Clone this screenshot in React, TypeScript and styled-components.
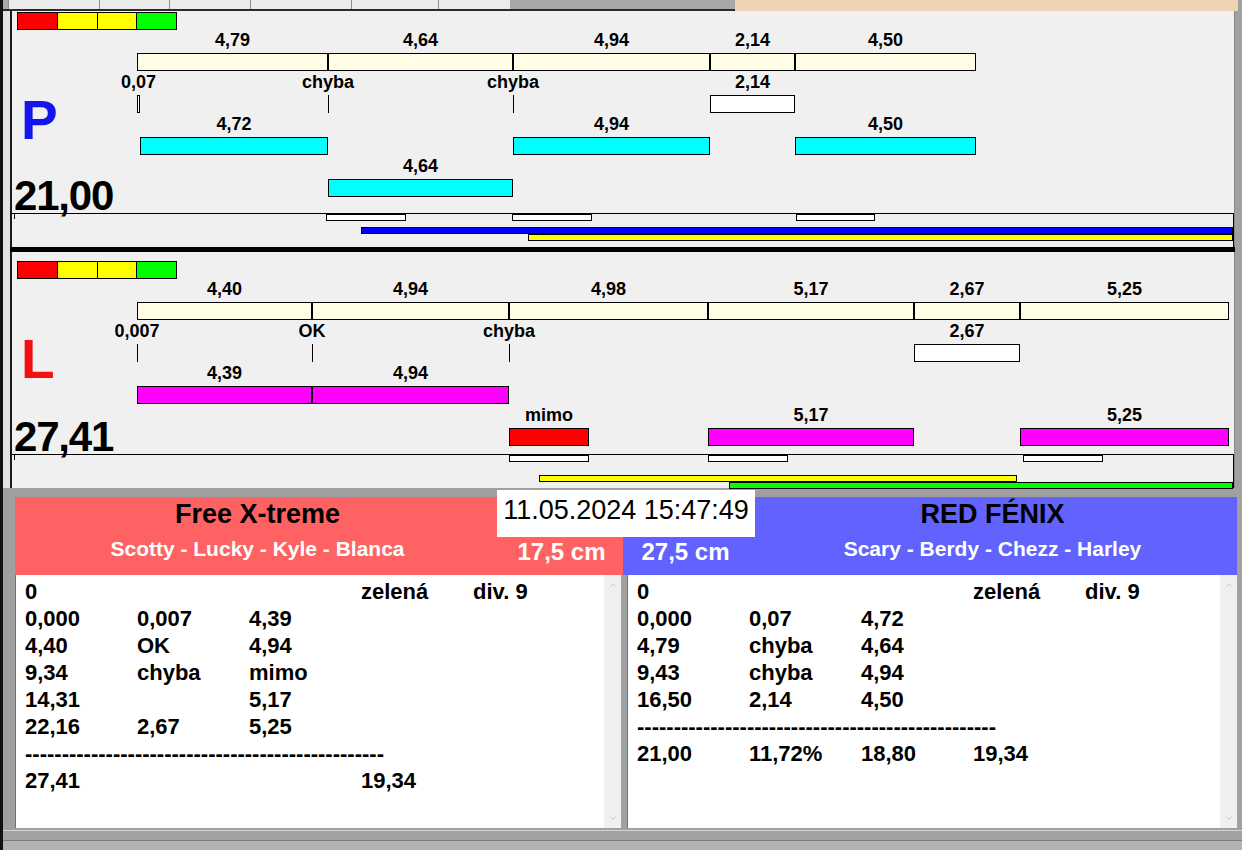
import React from "react"
import styled, { createGlobalStyle } from "styled-components"
import { ChevronUp, ChevronDown } from "lucide-react"

const GlobalStyle = createGlobalStyle`
  html, body {
    margin: 0;
    padding: 0;
    background: #a0a0a0;
  }
  body {
    font-family: "Liberation Sans", Arial, sans-serif;
  }
`

// px per second on the timeline
const SCALE = 39.85
const tx = (t: number) => Math.round(t * SCALE)

type Kind = "beige" | "white" | "cyan" | "magenta" | "red"
type Seg = { from: number; to: number; label: string; kind: Kind }
type Run = { from: number; to?: number; color: string }

type Race = {
  letter: string
  letterColor: string
  score: string
  padTop: number
  letterGap: number
  lanes: Seg[][]
  marks: number[]
  runs: Run[][]
}

const fills: Record<Kind, string> = {
  beige: "#fffde6",
  white: "#ffffff",
  cyan: "#00ffff",
  magenta: "#ff00ff",
  red: "#ff0000",
}

const seg = (from: number, to: number, label: string, kind: Kind): Seg => ({ from, to, label, kind })

const raceP: Race = {
  letter: "P",
  letterColor: "#1414ee",
  score: "21,00",
  padTop: 1,
  letterGap: 63,
  lanes: [
    [
      seg(0, 4.79, "4,79", "beige"),
      seg(4.79, 9.43, "4,64", "beige"),
      seg(9.43, 14.37, "4,94", "beige"),
      seg(14.37, 16.51, "2,14", "beige"),
      seg(16.51, 21.05, "4,50", "beige"),
    ],
    [
      seg(0, 0.07, "0,07", "white"),
      seg(4.79, 4.79, "chyba", "white"),
      seg(9.43, 9.43, "chyba", "white"),
      seg(14.37, 16.51, "2,14", "white"),
    ],
    [
      seg(0.07, 4.79, "4,72", "cyan"),
      seg(9.43, 14.37, "4,94", "cyan"),
      seg(16.51, 21.05, "4,50", "cyan"),
    ],
    [seg(4.79, 9.43, "4,64", "cyan")],
  ],
  marks: [4.74, 9.41, 16.53],
  runs: [[{ from: 5.62, color: "#0000ff" }], [{ from: 9.81, color: "#ffff00" }], []],
}

const raceL: Race = {
  letter: "L",
  letterColor: "#f21010",
  score: "27,41",
  padTop: 9,
  letterGap: 53,
  lanes: [
    [
      seg(0, 4.4, "4,40", "beige"),
      seg(4.4, 9.34, "4,94", "beige"),
      seg(9.34, 14.32, "4,98", "beige"),
      seg(14.32, 19.49, "5,17", "beige"),
      seg(19.49, 22.16, "2,67", "beige"),
      seg(22.16, 27.41, "5,25", "beige"),
    ],
    [
      seg(0, 0.007, "0,007", "white"),
      seg(4.4, 4.4, "OK", "white"),
      seg(9.34, 9.34, "chyba", "white"),
      seg(19.49, 22.16, "2,67", "white"),
    ],
    [seg(0.007, 4.4, "4,39", "magenta"), seg(4.4, 9.34, "4,94", "magenta")],
    [
      seg(9.34, 11.34, "mimo", "red"),
      seg(14.32, 19.49, "5,17", "magenta"),
      seg(22.16, 27.41, "5,25", "magenta"),
    ],
  ],
  marks: [9.34, 14.33, 22.23],
  runs: [[], [{ from: 10.09, to: 22.08, color: "#ffff00" }], [{ from: 14.86, color: "#00ff00" }]],
}

type Team = {
  name: string
  players: string
  cm: string
  bg: string
  side: "left" | "right"
  rows: string[][]
  total: string[]
}

const DASHES = "-".repeat(49)

const teams: Team[] = [
  {
    name: "Free X-treme",
    players: "Scotty - Lucky - Kyle - Blanca",
    cm: "17,5 cm",
    bg: "#ff6262",
    side: "left",
    rows: [
      ["0", "", "", "zelená", "div. 9"],
      ["0,000", "0,007", "4,39"],
      ["4,40", "OK", "4,94"],
      ["9,34", "chyba", "mimo"],
      ["14,31", "", "5,17"],
      ["22,16", "2,67", "5,25"],
    ],
    total: ["27,41", "", "", "19,34"],
  },
  {
    name: "RED FÉNIX",
    players: "Scary - Berdy - Chezz - Harley",
    cm: "27,5 cm",
    bg: "#6262ff",
    side: "right",
    rows: [
      ["0", "", "", "zelená", "div. 9"],
      ["0,000", "0,07", "4,72"],
      ["4,79", "chyba", "4,64"],
      ["9,43", "chyba", "4,94"],
      ["16,50", "2,14", "4,50"],
    ],
    total: ["21,00", "11,72%", "18,80", "19,34"],
  },
]

const tabWidths = [91, 70, 81, 101, 87, 72]

const Lanes = ({ lanes }: { lanes: Seg[][] }) => (
  <LaneStack>
    {lanes.map((lane, i) => (
      <Lane key={i}>
        {lane.map((s, j) => {
          const width = tx(s.to) - tx(s.from)
          return (
            <Slot key={j} style={{ left: tx(s.from), width }}>
              <Label>{s.label}</Label>
              {width > 0 ? <Bar $kind={s.kind} /> : <Tick />}
            </Slot>
          )
        })}
      </Lane>
    ))}
  </LaneStack>
)

const ChartPanel = ({ race }: { race: Race }) => (
  <Panel $padTop={race.padTop}>
    <ColorStrip>
      <Swatch $c="#ff0000" />
      <Swatch $c="#ffff00" />
      <Swatch $c="#ffff00" />
      <Swatch $c="#00ff00" />
    </ColorStrip>
    <Body>
      <Side>
        <Letter $color={race.letterColor} $gap={race.letterGap}>
          {race.letter}
        </Letter>
        <Score>{race.score}</Score>
      </Side>
      <Lanes lanes={race.lanes} />
    </Body>
    <Timeline>
      <MarkRow>
        {race.marks.map((m, i) => (
          <Mark key={i} style={{ left: tx(m), width: tx(m + 2) - tx(m) }} />
        ))}
      </MarkRow>
      {race.runs.map((row, i) => (
        <RunRow key={i} $h={i === 2 ? 6 : 7}>
          {row.map((r, j) => (
            <RunBar
              key={j}
              $color={r.color}
              style={r.to === undefined ? { left: tx(r.from), right: 0 } : { left: tx(r.from), width: tx(r.to) - tx(r.from) }}
            />
          ))}
        </RunRow>
      ))}
    </Timeline>
  </Panel>
)

const TeamBlock = ({ team }: { team: Team }) => {
  const nameCol = team.side === "left" ? 1 : 2
  const cmCol = team.side === "left" ? 2 : 1
  return (
    <TeamCol>
      <Header $bg={team.bg} $side={team.side}>
        <TeamName $col={nameCol}>{team.name}</TeamName>
        <Players $col={nameCol}>{team.players}</Players>
        <Cm $col={cmCol}>{team.cm}</Cm>
      </Header>
      <List $side={team.side}>
        <ListBody>
          {team.rows.map((r, i) => (
            <Row key={i}>
              {r.map((c, j) => (
                <span key={j}>{c}</span>
              ))}
            </Row>
          ))}
          <Row>
            <Dashes>{DASHES}</Dashes>
          </Row>
          <Row>
            {team.total.map((c, j) => (
              <span key={j}>{c}</span>
            ))}
          </Row>
        </ListBody>
        <Scrollbar>
          <ChevronUp size={10} strokeWidth={1.6} />
          <ChevronDown size={10} strokeWidth={1.6} />
        </Scrollbar>
      </List>
    </TeamCol>
  )
}

const App = () => {
  return (
    <>
      <GlobalStyle />
      <Frame>
        <TabStrip>
          <TabRow>
            {tabWidths.map((w, i) => (
              <Tab key={i} $w={w} />
            ))}
          </TabRow>
          <Peach />
        </TabStrip>
        <Charts>
          <ChartPanel race={raceP} />
          <ThickRule />
          <ChartPanel race={raceL} />
        </Charts>
        <Teams>
          {teams.map((t) => (
            <TeamBlock key={t.name} team={t} />
          ))}
          <DateBox>11.05.2024 15:47:49</DateBox>
        </Teams>
        <StatusBar />
      </Frame>
    </>
  )
}

export default App

const Frame = styled.div`
    width: 1242px;
    height: 850px;
    box-sizing: border-box;
    border-left: 3px solid #111;
    background: #a0a0a0;
    display: flex;
    flex-direction: column;
    overflow: hidden;
`

const TabStrip = styled.div`
    display: flex;
    height: 11px;
    flex-shrink: 0;
`

const TabRow = styled.div`
    display: flex;
    width: 732px;
    height: 11px;
    box-sizing: border-box;
    padding-left: 5px;
    border-bottom: 2px solid #2b2b2b;
    background: #a8a8a8;
`

const Tab = styled.div<{ $w: number }>`
    width: ${(p) => p.$w}px;
    height: 100%;
    box-sizing: border-box;
    background: #ebebeb;
    border-left: 1px solid #8c8c8c;
`

const Peach = styled.div`
    flex: 1;
    margin-right: 4px;
    background: #efd3b6;
`

const Charts = styled.div`
    display: flex;
    flex-direction: column;
    padding: 0 7px;
    background: linear-gradient(to right, #e2e2e2 7px, #a0a0a0 7px);
`

const Panel = styled.div<{ $padTop: number }>`
    height: 236px;
    box-sizing: border-box;
    padding-top: ${(p) => p.$padTop}px;
    border-left: 2px solid #1a1a1a;
    border-right: 1px solid #888;
    background: #f0f0f0;
    display: flex;
    flex-direction: column;
`

const ThickRule = styled.div`
    height: 5px;
    background: #000;
`

const ColorStrip = styled.div`
    display: flex;
    width: 160px;
    height: 18px;
    box-sizing: border-box;
    margin-left: 5px;
    border: 1px solid #000;
`

const Swatch = styled.div<{ $c: string }>`
    flex: 1;
    background: ${(p) => p.$c};
    & + & {
        border-left: 1px solid #000;
    }
`

const Body = styled.div`
    flex: 1;
    display: flex;
    min-height: 0;
`

const Side = styled.div`
    width: 125px;
    flex-shrink: 0;
    display: flex;
    flex-direction: column;
`

const Letter = styled.div<{ $color: string; $gap: number }>`
    margin-top: ${(p) => p.$gap}px;
    margin-left: 9px;
    font-size: 55px;
    line-height: 54px;
    font-weight: 700;
    color: ${(p) => p.$color};
`

const Score = styled.div`
    margin-top: auto;
    margin-left: 2px;
    font-size: 42px;
    line-height: 34px;
    font-weight: 700;
    letter-spacing: -1.2px;
    color: #000;
`

const LaneStack = styled.div`
    flex: 1;
    display: flex;
    flex-direction: column;
    gap: 1px;
`

const Lane = styled.div`
    position: relative;
    height: 41px;
`

const Slot = styled.div`
    position: absolute;
    top: 0;
    bottom: 0;
    display: flex;
    flex-direction: column;
    align-items: center;
`

const Label = styled.div`
    height: 23px;
    line-height: 20px;
    font-size: 18px;
    font-weight: 700;
    white-space: nowrap;
    color: #000;
`

const Bar = styled.div<{ $kind: Kind }>`
    align-self: stretch;
    height: 18px;
    box-sizing: border-box;
    border: 1px solid #000;
    background: ${(p) => fills[p.$kind]};
`

const Tick = styled.div`
    width: 1px;
    height: 18px;
    background: #000;
`

const Timeline = styled.div`
    position: relative;
    height: 34px;
    flex-shrink: 0;
    box-sizing: border-box;
    padding-left: 125px;
    border-top: 1px solid #000;
    border-right: 1px solid #000;

    &::before {
        content: "";
        position: absolute;
        left: 2px;
        top: 0;
        width: 1px;
        height: 5px;
        background: #000;
    }
`

const MarkRow = styled.div`
    position: relative;
    height: 7px;
    margin-bottom: 6px;
`

const Mark = styled.div`
    position: absolute;
    top: 0;
    height: 7px;
    box-sizing: border-box;
    border: 1px solid #000;
    background: #fff;
`

const RunRow = styled.div<{ $h: number }>`
    position: relative;
    height: ${(p) => p.$h}px;
`

const RunBar = styled.div<{ $color: string }>`
    position: absolute;
    top: 0;
    height: 7px;
    box-sizing: border-box;
    border: 1px solid #000;
    background: ${(p) => p.$color};
`

const Teams = styled.div`
    position: relative;
    display: grid;
    grid-template-columns: 608px 614px;
    padding: 9px 5px 2px 12px;
`

const TeamCol = styled.div`
    display: flex;
    flex-direction: column;
`

const Header = styled.div<{ $bg: string; $side: "left" | "right" }>`
    height: 78px;
    display: grid;
    grid-template-rows: 40px 38px;
    grid-template-columns: ${(p) => (p.$side === "left" ? "485px 1fr" : "125px 1fr")};
    background: ${(p) => p.$bg};
    font-weight: 700;
    text-align: center;
    white-space: nowrap;
`

const TeamName = styled.div<{ $col: number }>`
    grid-row: 1;
    grid-column: ${(p) => p.$col};
    font-size: 27px;
    line-height: 34px;
    color: #000;
`

const Players = styled.div<{ $col: number }>`
    grid-row: 2;
    grid-column: ${(p) => p.$col};
    font-size: 21px;
    line-height: 24px;
    color: #fff;
`

const Cm = styled.div<{ $col: number }>`
    grid-row: 2;
    grid-column: ${(p) => p.$col};
    font-size: 24px;
    line-height: 30px;
    color: #fff;
`

const DateBox = styled.div`
    position: absolute;
    left: 494px;
    top: 2px;
    width: 258px;
    height: 47px;
    background: #fff;
    text-align: center;
    font-size: 27px;
    line-height: 41px;
    color: #000;
`

const List = styled.div<{ $side: "left" | "right" }>`
    height: 253px;
    display: flex;
    margin: ${(p) => (p.$side === "left" ? "0 2px 0 0" : "0 0 0 4px")};
    border-left: 1px solid #707070;
    background: #fff;
`

const ListBody = styled.div`
    flex: 1;
    padding: 3px 0 0 9px;
    font-size: 22px;
    font-weight: 700;
    color: #000;
`

const Row = styled.div`
    display: grid;
    grid-template-columns: repeat(5, 112px);
    height: 27px;
    line-height: 27px;
    white-space: nowrap;
`

const Dashes = styled.span`
    grid-column: 1 / -1;
`

const Scrollbar = styled.div`
    width: 17px;
    background: #f0f0f0;
    display: flex;
    flex-direction: column;
    justify-content: space-between;
    align-items: center;
    padding: 5px 0;
    color: #b4b4b4;
`

const StatusBar = styled.div`
    flex: 1;
    border-top: 1px solid #d4d4d4;
    background: linear-gradient(#a2a2a2 9px, #7c7c7c 9px 10px, #b2b2b2 10px);
`
